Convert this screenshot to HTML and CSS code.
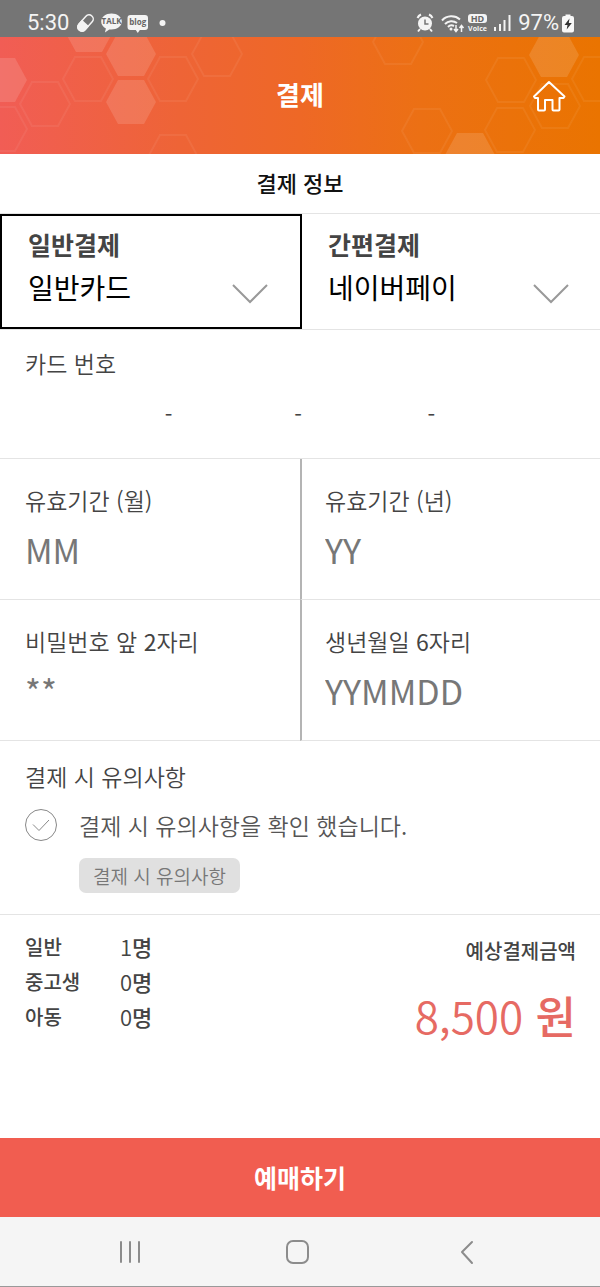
FILE: index.html
```html
<!DOCTYPE html>
<html lang="ko">
<head>
<meta charset="utf-8">
<meta name="viewport" content="width=device-width, initial-scale=1">
<title>결제</title>
<link rel="stylesheet" href="styles.css">
</head>
<body>
<div class="status">
  <span class="clock">5:30</span>
  <svg class="status-left" width="94" height="22" viewBox="0 0 94 22" aria-hidden="true">
    <g transform="rotate(-48 9.500 11)">
      <rect x="0" y="6.800" width="19" height="8.400" rx="4.200" fill="none" stroke="#f4f4f4" stroke-width="1.500"/>
      <path d="M9.500 6.200H4.200a4.800 4.800 0 0 0 0 9.600h5.300z" fill="#f4f4f4"/>
    </g>
    <path d="M35.500 1.500c-5.700 0-10.300 3.500-10.300 8 0 3 1.900 5.500 4.700 6.900l-1 4.200 4.400-3.200c6.900.8 12.500-2.800 12.500-7.900 0-4.500-4.600-8-10.300-8z" fill="#f4f4f4"/>
    <text x="35.500" y="12" class="tiny">TALK</text>
    <path d="M54.500 3h14.500a3 3 0 0 1 3 3v9a3 3 0 0 1-3 3h-5.200l-2 3-2-3h-5.300a3 3 0 0 1-3-3V6a3 3 0 0 1 3-3z" fill="#f4f4f4"/>
    <text x="61.700" y="12.500" class="tiny">blog</text>
    <circle cx="86.500" cy="11" r="3" fill="#f4f4f4"/>
  </svg>
  <svg class="status-right" width="96" height="22" viewBox="0 0 96 22" aria-hidden="true">
    <g fill="none" stroke="#f4f4f4" stroke-width="2">
      <path d="M1.500 6a7 7 0 0 1 3.500-3.500M13 2.500A7 7 0 0 1 16.500 6M4 17l-2 2.500M14 17l2 2.500"/>
      <circle cx="9" cy="11.500" r="7" fill="#f4f4f4" stroke="none"/>
      <path d="M9 7.500v4.500h3.500" stroke="#757575" stroke-width="1.500"/>
      <path d="M26 8.500a13 13 0 0 1 18-1M29 12a9 9 0 0 1 12-1M32 15a5 5 0 0 1 6-1"/>
      <path d="M40 13v6M38 17l2 2.500 2-2.500M45.500 20v-6M43.500 16l2-2.500 2 2.500" stroke-width="1.500"/>
    </g>
    <circle cx="35" cy="17" r="1.500" fill="#f4f4f4"/>
    <rect x="52" y="2" width="19" height="9" rx="3" fill="#f4f4f4"/>
    <text x="61.500" y="9.800" class="hd">HD</text>
    <text x="61.500" y="19" class="voice">Voice</text>
    <path d="M79 19v-4M84 19v-7" stroke="#f4f4f4" stroke-width="2"/>
    <path d="M88.500 19V8M93.500 19V3" stroke="#f4f4f4" stroke-width="2"/>
  </svg>
  <span class="battery">97%</span>
  <svg width="12" height="20" viewBox="0 0 12 20" aria-hidden="true">
    <path d="M3.500 1.500h5v1.500h1.500a2 2 0 0 1 2 2v12.500a2 2 0 0 1-2 2H2a2 2 0 0 1-2-2V5a2 2 0 0 1 2-2h1.500z" fill="#f8f8f8"/>
    <path d="M7.500 5.500L2.500 12h3l-.8 4.500L9.800 10h-3z" fill="#333"/>
  </svg>
</div>

<header class="header">
  <svg class="pattern" viewBox="0 37 600 117" preserveAspectRatio="none" aria-hidden="true">
    <defs><path id="hex" d="M-25 0L-13-22H13L25 0 13 22H-13z"/></defs>
    <g class="hex-fill">
      <use href="#hex" x="89" y="30"/><use href="#hex" x="131" y="54"/><use href="#hex" x="131" y="102"/>
      <use href="#hex" x="2" y="80"/><use href="#hex" x="554" y="55"/><use href="#hex" x="470" y="155"/>
    </g>
    <g class="hex-line">
      <use href="#hex" x="88" y="79"/><use href="#hex" x="45" y="104"/><use href="#hex" x="2" y="129"/>
      <use href="#hex" x="173" y="79"/><use href="#hex" x="217" y="54"/><use href="#hex" x="173" y="157"/>
      <use href="#hex" x="398" y="42"/><use href="#hex" x="511" y="80"/><use href="#hex" x="555" y="106"/>
      <use href="#hex" x="597" y="79"/><use href="#hex" x="510" y="130"/><use href="#hex" x="427" y="131"/>
    </g>
  </svg>
  <h1>결제</h1>
  <a class="home" href="#" aria-label="홈">
    <svg width="34" height="32" viewBox="0 0 34 32"><path d="M17 2L2 16.500l1 1.500h3v11.500q0 1 1 1h5q1 0 1-1V20h7.500v9.500q0 1 1 1h5q1 0 1-1V18h4l1-1.500z"/></svg>
  </a>
</header>

<main>
  <h2 class="subtitle">결제 정보</h2>

  <div class="methods">
    <div class="method selected">
      <label for="general">일반결제</label>
      <select id="general"><option>일반카드</option></select>
      <svg class="chevron" width="38" height="22" viewBox="0 0 38 22" aria-hidden="true"><path d="M2 2l17 17L36 2"/></svg>
    </div>
    <div class="method">
      <label for="simple">간편결제</label>
      <select id="simple"><option>네이버페이</option></select>
      <svg class="chevron" width="38" height="22" viewBox="0 0 38 22" aria-hidden="true"><path d="M2 2l17 17L36 2"/></svg>
    </div>
  </div>

  <section class="card">
    <label for="card1">카드 번호</label>
    <div class="numbers">
      <input id="card1" inputmode="numeric" maxlength="4"><span>-</span>
      <input aria-label="카드 번호 둘째 자리" inputmode="numeric" maxlength="4"><span>-</span>
      <input aria-label="카드 번호 셋째 자리" inputmode="numeric" maxlength="4"><span>-</span>
      <input aria-label="카드 번호 넷째 자리" inputmode="numeric" maxlength="4">
    </div>
  </section>

  <div class="fields">
    <div class="field"><label for="month">유효기간 (월)</label><input id="month" placeholder="MM"></div>
    <div class="field"><label for="year">유효기간 (년)</label><input id="year" placeholder="YY"></div>
    <div class="field"><label for="pin">비밀번호 앞 <span class="digit">2</span>자리</label><input id="pin" type="password" placeholder="**"></div>
    <div class="field"><label for="birth">생년월일 <span class="digit">6</span>자리</label><input id="birth" placeholder="YYMMDD"></div>
  </div>

  <section class="notice">
    <h3>결제 시 유의사항</h3>
    <label class="agree" for="agree">
      <span class="check">
        <input type="checkbox" id="agree">
        <svg viewBox="0 0 32 32" aria-hidden="true"><path d="M8 15.500l6 6L24 11"/></svg>
      </span>
      <span>결제 시 유의사항을 확인 했습니다.</span>
    </label>
    <button class="terms" type="button">결제 시 유의사항</button>
  </section>

  <section class="summary">
    <dl class="people">
      <dt>일반</dt><dd><span>1</span>명</dd>
      <dt>중고생</dt><dd><span>0</span>명</dd>
      <dt>아동</dt><dd><span>0</span>명</dd>
    </dl>
    <div class="total">
      <p class="total-label">예상결제금액</p>
      <p class="amount"><span>8,500</span> 원</p>
    </div>
  </section>
</main>

<button class="submit" type="button">예매하기</button>

<nav class="system">
  <button type="button" aria-label="최근 앱"><svg width="26" height="28" viewBox="0 0 26 28"><path d="M4 4v20M13 4v20M22 4v20"/></svg></button>
  <button type="button" aria-label="홈 화면"><svg width="26" height="28" viewBox="0 0 26 28"><rect x="2" y="3" width="21" height="22" rx="6"/></svg></button>
  <button type="button" aria-label="뒤로"><svg width="26" height="28" viewBox="0 0 26 28"><path d="M18 4L8 14l10 11"/></svg></button>
</nav>
</body>
</html>
```
FILE: styles.css
```css
* { box-sizing: border-box; }

body {
  margin: 0;
  min-height: 100vh;
  display: flex;
  flex-direction: column;
  background: #fff;
  color: #444;
  font-family: "Noto Sans CJK KR", "Noto Sans", sans-serif;
  font-size: 23px;
  font-weight: 350;
  line-height: 36px;
}

h1, h2, h3, p, dl, dd { margin: 0; }

input, select, button {
  margin: 0;
  padding: 0;
  border: 0;
  border-radius: 0;
  background: none;
  color: inherit;
  font: inherit;
  appearance: none;
}

label { display: block; }

/* Status bar */
.status {
  display: flex;
  align-items: center;
  height: 37px;
  padding: 8px 26px 0 27px;
  background: #757575;
  color: #f4f4f4;
  font-family: Roboto, sans-serif;
  font-size: 22px;
  font-weight: 400;
  line-height: 28px;
}
.status-left { margin-left: 7px; }
.status-right { margin-left: auto; }
.battery { margin: 0 3px 0 6px; }
.tiny, .hd, .voice {
  font-family: "Open Sans", sans-serif;
  font-weight: 700;
  text-anchor: middle;
}
.tiny { font-size: 8px; fill: #666; }
.hd { font-size: 9px; fill: #666; }
.voice { font-size: 7px; fill: #f4f4f4; }

/* Header */
.header {
  position: relative;
  display: grid;
  grid-template-columns: 1fr auto 1fr;
  align-items: center;
  height: 117px;
  padding: 0 34px;
  overflow: hidden;
  background: linear-gradient(90deg, #f15d55, #ee6436 30%, #ee6826 50%, #ec7014 70%, #ea7400);
  color: #fff;
}
.pattern { position: absolute; inset: 0; width: 100%; height: 100%; }
.hex-fill { fill: #fff; fill-opacity: .13; }
.hex-line { fill: none; stroke: #fff; stroke-opacity: .06; stroke-width: 2; }
.header h1 {
  position: relative;
  grid-column: 2;
  padding-bottom: 4px;
  font-size: 26px;
  font-weight: 700;
  line-height: 36px;
}
.home { position: relative; justify-self: end; display: flex; }
.home path { fill: none; stroke: #fff; stroke-width: 2; stroke-linejoin: round; }

main { flex: 1; display: flex; flex-direction: column; }

.subtitle {
  padding: 10px 0 13px;
  border-bottom: 1px solid #e4e4e4;
  color: #111;
  font-size: 22px;
  font-weight: 500;
  line-height: 36px;
  text-align: center;
}

/* Payment methods */
.methods {
  display: grid;
  grid-template-columns: 1fr 1fr;
  border-bottom: 1px solid #e4e4e4;
}
.method {
  position: relative;
  padding: 10px 26px 16px;
  border: 2px solid transparent;
  color: #000;
}
.method.selected { margin-right: -2px; border-color: #000; }
.method label {
  margin-bottom: 1px;
  color: #444;
  font-size: 25px;
  font-weight: 700;
}
.method select {
  display: block;
  width: 100%;
  height: 48px;
  font-size: 28px;
  font-weight: 400;
  line-height: 48px;
}
.chevron { position: absolute; right: 28px; bottom: 22px; pointer-events: none; }
.selected .chevron { right: 31px; }
.chevron path { fill: none; stroke: #999; stroke-width: 2; }

/* Card number */
.card { padding: 15px 25px 13px; border-bottom: 1px solid #e4e4e4; }
.numbers {
  display: grid;
  grid-template-columns: 140fr auto 122fr auto 126fr auto 140fr;
  align-items: center;
  height: 60px;
  margin-top: 4px;
  padding-bottom: 4px;
}
.numbers input { width: 100%; min-width: 0; height: 48px; }
.numbers span { font-size: 22px; font-weight: 400; }

.fields { display: grid; grid-template-columns: 1fr 1fr; }
.field {
  min-width: 0;
  padding: 23px 25px 24px;
  border-bottom: 1px solid #e4e4e4;
}
.field:nth-child(even) { padding-left: 23px; border-left: 2px solid #b4b4b4; }
.field input {
  display: block;
  width: 100%;
  height: 48px;
  margin-top: 9px;
  padding-bottom: 4px;
  font-size: 34px;
  font-weight: 400;
}
.field input::placeholder { color: #777; opacity: 1; }
.digit { font-weight: 400; }

/* Notice */
.notice { padding: 17px 25px 21px; border-bottom: 1px solid #e4e4e4; }
.notice h3 { font-size: 23px; font-weight: 350; }
.agree { display: flex; align-items: center; gap: 22px; margin-top: 13px; color: #555; }
.check { display: grid; width: 32px; height: 32px; }
.check input, .check svg { grid-area: 1 / 1; width: 32px; height: 32px; }
.check input { border: 1px solid #888; border-radius: 50%; }
.check path { fill: none; stroke: #888; stroke-width: 1; }
.terms {
  display: block;
  margin: 15px 0 0 54px;
  padding: 0 14px;
  border-radius: 7px;
  background: #e0e0e0;
  color: #777;
  font-size: 19px;
  line-height: 35px;
}

/* Summary */
.summary {
  display: flex;
  justify-content: space-between;
  padding: 14px 24px 14px 25px;
  font-weight: 500;
}
.people {
  display: grid;
  grid-template-columns: 95px auto;
  align-content: start;
  font-size: 20px;
  line-height: 35px;
}
.people dd { font-size: 22px; }
.people span { font-weight: 350; }
.total { text-align: right; }
.total-label { padding-top: 4px; font-size: 20px; }
.amount { margin-top: 14px; color: #e66a63; font-size: 44px; line-height: 64px; }
.amount span { font-weight: 350; }

.submit {
  height: 79px;
  padding-bottom: 2px;
  background: #f15d50;
  color: #fff;
  font-size: 25px;
  font-weight: 700;
}

/* System navigation */
.system {
  display: flex;
  justify-content: space-around;
  align-items: center;
  height: 70px;
  padding: 0 49px 0 46px;
  border-bottom: 1px solid #999;
  background: #f5f5f5;
}
.system button { display: flex; }
.system svg { fill: none; stroke: #8c8c8c; stroke-width: 2; stroke-linecap: round; stroke-linejoin: round; }
```
